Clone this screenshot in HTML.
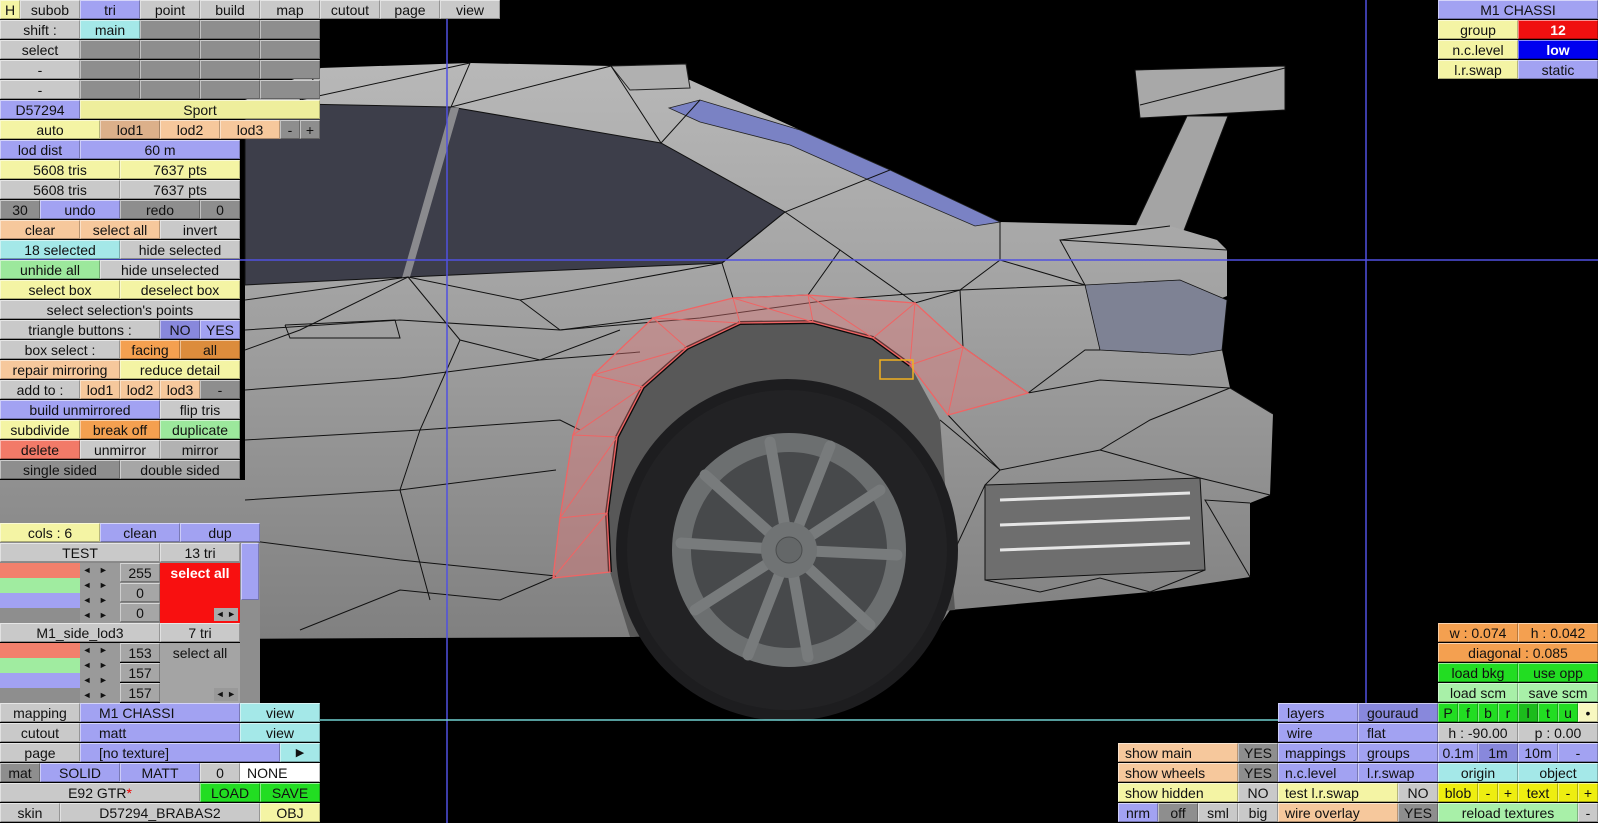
<!DOCTYPE html>
<html><head><meta charset="utf-8">
<style>
*{margin:0;padding:0;box-sizing:border-box}
body{width:1598px;height:823px;background:#000;position:relative;overflow:hidden;font-family:"Liberation Sans",sans-serif;font-size:14px;color:#111}
svg{position:absolute;left:0;top:0}
.b{position:absolute;height:19px;line-height:19px;text-align:center;white-space:nowrap;overflow:hidden;border-top:1px solid rgba(255,255,255,.55);border-left:1px solid rgba(255,255,255,.45);border-right:1px solid rgba(0,0,0,.25);border-bottom:1px solid rgba(0,0,0,.3)}
.g{background:#c9c9c9}.d{background:#8e8e8e}.u{background:#a2a2f2}.U{background:#8888dc}
.y{background:#f4f4a4}.p{background:#f6c89c}.P{background:#dcb08a}.c{background:#a4e8e8}
.o{background:#f4a050}.O{background:#dc8c3c}.n{background:#9ce89c}.r{background:#f27a68}
.G{background:#22dd22}.L{background:#a8f0a8}.Y{background:#eeee10}.w{background:#fff}
.m{background:#b2b2b2}.k{background:#a6a6a6}
.l{text-align:left;padding-left:18px}
</style></head><body>
<svg width="1598" height="823" viewBox="0 0 1598 823">
<defs>
<linearGradient id="bg" x1="0" y1="0" x2="0" y2="1">
<stop offset="0" stop-color="#b8b8b8"/><stop offset=".45" stop-color="#a0a0a0"/><stop offset="1" stop-color="#808080"/>
</linearGradient>
</defs>
<!-- spoiler -->
<polygon points="1187,116 1228,116 1183,233 1132,233" fill="#a4a4a4" stroke="#111" stroke-width="1"/>
<polygon points="1135,70 1285,66 1285,110 1140,118" fill="#a8a8a8" stroke="#111" stroke-width="1"/>
<line x1="1140" y1="105" x2="1285" y2="68" stroke="#111"/>
<!-- body -->
<polygon points="245,100 320,68 470,63 611,66 690,80 800,130 890,170 1000,222 1170,226 1217,240 1227,250 1227,296 1217,300 1222,350 1230,388 1273,414 1270,495 1250,503 1250,577 1150,592 950,610 940,625 630,637 0,640 0,480 245,480" fill="url(#bg)"/>
<polygon points="611,66 686,64 690,88 630,90" fill="#b0b0b0" stroke="#222" stroke-width="1"/>
<!-- window -->
<polygon points="245,103 451,107 661,143 785,212 722,263 408,277 245,285" fill="#3d3e4a" stroke="#111"/>
<polygon points="451,107 459,108 410,277 402,278" fill="#8a8a8e"/>
<!-- blue strip -->
<polygon points="669,108 700,100 800,130 890,170 1000,222 975,226 880,185 790,145 700,122" fill="#7a82c4" stroke="#222" stroke-width=".8"/>
<!-- tail light -->
<polygon points="1085,285 1180,280 1227,300 1222,350 1190,355 1100,350" fill="#7e8294" stroke="#111" stroke-width=".8"/>
<!-- vents -->
<polygon points="985,485 1200,478 1205,570 985,580" fill="#6e6e6e" stroke="#111"/>
<g stroke="#e6e6e6" stroke-width="3"><line x1="1000" y1="500" x2="1190" y2="493"/><line x1="1000" y1="525" x2="1190" y2="518"/><line x1="1000" y1="550" x2="1190" y2="543"/></g>
<!-- mesh lines -->
<g stroke="#111" stroke-width="1" fill="none">
<polyline points="245,300 408,277 520,300 722,263 785,212 890,170"/>
<polyline points="245,330 400,320 560,330 700,318 830,300 960,290 1085,285"/>
<polyline points="245,390 400,378 540,360 640,352"/>
<polyline points="245,440 420,430 560,420 580,430"/>
<polyline points="245,500 400,490 556,470"/>
<polyline points="245,540 400,560 556,576"/>
<polyline points="300,630 400,590 500,600 556,576"/>
<polyline points="408,277 460,340 540,360 620,330"/>
<polyline points="408,277 300,330 245,350"/>
<polyline points="460,340 420,430 400,490 430,600"/>
<polyline points="520,300 560,330 653,318"/>
<polyline points="722,263 733,298 808,295 840,250 785,212"/>
<polyline points="840,250 915,303 960,290 1000,260 1000,222"/>
<polyline points="960,290 963,347 1028,393 1085,350 1100,350"/>
<polyline points="1000,260 1085,285 1060,240 1170,226"/>
<polyline points="1060,240 1227,250"/>
<polyline points="1028,393 1100,380 1230,388 1273,414"/>
<polyline points="948,415 1000,470 985,485 950,560 950,610"/>
<polyline points="1000,470 1100,450 1150,420 1230,388"/>
<polyline points="1100,450 1200,478 1270,495"/>
<polyline points="1205,570 1150,592 1100,578 1040,592 985,580"/>
<polyline points="940,420 1000,470"/>
<polyline points="1250,503 1205,500 1250,577"/>
<polyline points="285,325 395,320 400,338 290,338 285,325"/>
<polyline points="320,68 300,100 470,63 451,107 611,66 661,143 700,100"/>
</g>
<!-- arch interior -->
<polygon points="610,572 607,513 617,437 643,387 687,348 740,323 813,322 873,338 910,365 940,420 955,610 630,637" fill="#585858"/>
<polyline points="610,572 607,513 617,437 643,387 687,348 740,323 813,322 873,338 910,365" fill="none" stroke="#0a0a0a" stroke-width="4"/>
<!-- red arch -->
<g stroke="#f06464" stroke-width="1.3" fill="rgba(232,120,120,0.4)">
<polygon points="553,578 560,518 573,435 593,375 653,318 733,298 808,295 915,303 963,347 1028,393 948,415 910,365 873,338 813,322 740,323 687,348 643,387 617,437 607,513 610,572"/>
</g>
<g stroke="#f06464" stroke-width="1" fill="none">
<polyline points="553,578 607,513 560,518 617,437 573,435 643,387 593,375 687,348 653,318 740,323 733,298 813,322 808,295 873,338 915,303 910,365 963,347 948,415"/>
</g>
<rect x="880" y="360" width="33" height="19" fill="none" stroke="#f0b020" stroke-width="1.5"/>
<!-- wheel -->
<circle cx="787" cy="550" r="171" fill="#1d1d1f"/>
<circle cx="787" cy="550" r="160" fill="#222224"/>
<circle cx="789" cy="550" r="117" fill="#6c6f70"/>
<circle cx="789" cy="550" r="98" fill="#47494b"/>
<g stroke="#787b7c" stroke-width="11" stroke-linecap="round">
<line x1="789" y1="550" x2="770" y2="442"/><line x1="789" y1="550" x2="830" y2="446"/>
<line x1="789" y1="550" x2="880" y2="490"/><line x1="789" y1="550" x2="897" y2="555"/>
<line x1="789" y1="550" x2="870" y2="625"/><line x1="789" y1="550" x2="808" y2="657"/>
<line x1="789" y1="550" x2="748" y2="655"/><line x1="789" y1="550" x2="695" y2="610"/>
<line x1="789" y1="550" x2="681" y2="543"/><line x1="789" y1="550" x2="705" y2="475"/>
</g>
<circle cx="789" cy="550" r="28" fill="#707374"/>
<circle cx="789" cy="550" r="13" fill="#646768" stroke="#4a4c4d"/>
<!-- guide lines -->
<line x1="447" y1="0" x2="447" y2="823" stroke="#5050e0" stroke-width="1.5"/>
<line x1="1366" y1="0" x2="1366" y2="703" stroke="#5050e0" stroke-width="1.5"/>
<line x1="0" y1="260" x2="1598" y2="260" stroke="#5050e0" stroke-width="1.5"/>
<line x1="0" y1="720" x2="1278" y2="720" stroke="#70d0d0" stroke-width="1.5"/>
</svg>

<!-- top row -->
<div class="b y" style="left:0;top:0;width:20px">H</div>
<div class="b g" style="left:20px;top:0;width:60px">subob</div>
<div class="b u" style="left:80px;top:0;width:60px">tri</div>
<div class="b g" style="left:140px;top:0;width:60px">point</div>
<div class="b g" style="left:200px;top:0;width:60px">build</div>
<div class="b g" style="left:260px;top:0;width:60px">map</div>
<div class="b g" style="left:320px;top:0;width:60px">cutout</div>
<div class="b g" style="left:380px;top:0;width:60px">page</div>
<div class="b g" style="left:440px;top:0;width:60px">view</div>
<div class="b g" style="left:0;top:20px;width:80px">shift :</div>
<div class="b c" style="left:80px;top:20px;width:60px">main</div>
<div class="b d" style="left:140px;top:20px;width:60px"></div><div class="b d" style="left:200px;top:20px;width:60px"></div><div class="b d" style="left:260px;top:20px;width:60px"></div>
<div class="b g" style="left:0;top:40px;width:80px">select</div>
<div class="b d" style="left:80px;top:40px;width:60px"></div><div class="b d" style="left:140px;top:40px;width:60px"></div><div class="b d" style="left:200px;top:40px;width:60px"></div><div class="b d" style="left:260px;top:40px;width:60px"></div>
<div class="b g" style="left:0;top:60px;width:80px">-</div>
<div class="b d" style="left:80px;top:60px;width:60px"></div><div class="b d" style="left:140px;top:60px;width:60px"></div><div class="b d" style="left:200px;top:60px;width:60px"></div><div class="b d" style="left:260px;top:60px;width:60px"></div>
<div class="b g" style="left:0;top:80px;width:80px">-</div>
<div class="b d" style="left:80px;top:80px;width:60px"></div><div class="b d" style="left:140px;top:80px;width:60px"></div><div class="b d" style="left:200px;top:80px;width:60px"></div><div class="b d" style="left:260px;top:80px;width:60px"></div>
<div class="b u" style="left:0;top:100px;width:80px">D57294</div>
<div class="b y" style="left:80px;top:100px;width:240px;background:#eeee9c">Sport</div>
<div class="b y" style="left:0;top:120px;width:100px">auto</div>
<div class="b P" style="left:100px;top:120px;width:60px">lod1</div>
<div class="b p" style="left:160px;top:120px;width:60px">lod2</div>
<div class="b p" style="left:220px;top:120px;width:60px">lod3</div>
<div class="b d" style="left:280px;top:120px;width:20px">-</div>
<div class="b d" style="left:300px;top:120px;width:20px">+</div>
<div class="b u" style="left:0;top:140px;width:80px">lod dist</div>
<div class="b u" style="left:80px;top:140px;width:160px">60 m</div>
<div class="b y" style="left:0;top:160px;width:120px">5608 tris</div>
<div class="b y" style="left:120px;top:160px;width:120px">7637 pts</div>
<div class="b g" style="left:0;top:180px;width:120px">5608 tris</div>
<div class="b g" style="left:120px;top:180px;width:120px">7637 pts</div>
<div class="b d" style="left:0;top:200px;width:40px">30</div>
<div class="b u" style="left:40px;top:200px;width:80px">undo</div>
<div class="b d" style="left:120px;top:200px;width:80px">redo</div>
<div class="b d" style="left:200px;top:200px;width:40px">0</div>
<div class="b p" style="left:0;top:220px;width:80px">clear</div>
<div class="b p" style="left:80px;top:220px;width:80px">select all</div>
<div class="b g" style="left:160px;top:220px;width:80px">invert</div>
<div class="b c" style="left:0;top:240px;width:120px">18 selected</div>
<div class="b g" style="left:120px;top:240px;width:120px">hide selected</div>
<div class="b n" style="left:0;top:260px;width:100px">unhide all</div>
<div class="b g" style="left:100px;top:260px;width:140px">hide unselected</div>
<div class="b y" style="left:0;top:280px;width:120px">select box</div>
<div class="b y" style="left:120px;top:280px;width:120px">deselect box</div>
<div class="b g" style="left:0;top:300px;width:240px">select selection's points</div>
<div class="b g" style="left:0;top:320px;width:160px">triangle buttons :</div>
<div class="b U" style="left:160px;top:320px;width:40px">NO</div>
<div class="b u" style="left:200px;top:320px;width:40px">YES</div>
<div class="b g" style="left:0;top:340px;width:120px">box select :</div>
<div class="b o" style="left:120px;top:340px;width:60px">facing</div>
<div class="b O" style="left:180px;top:340px;width:60px">all</div>
<div class="b p" style="left:0;top:360px;width:120px">repair mirroring</div>
<div class="b y" style="left:120px;top:360px;width:120px">reduce detail</div>
<div class="b g" style="left:0;top:380px;width:80px">add to :</div>
<div class="b p" style="left:80px;top:380px;width:40px">lod1</div>
<div class="b p" style="left:120px;top:380px;width:40px">lod2</div>
<div class="b p" style="left:160px;top:380px;width:40px">lod3</div>
<div class="b d" style="left:200px;top:380px;width:40px">-</div>
<div class="b u" style="left:0;top:400px;width:160px">build unmirrored</div>
<div class="b g" style="left:160px;top:400px;width:80px">flip tris</div>
<div class="b y" style="left:0;top:420px;width:80px">subdivide</div>
<div class="b o" style="left:80px;top:420px;width:80px">break off</div>
<div class="b n" style="left:160px;top:420px;width:80px">duplicate</div>
<div class="b r" style="left:0;top:440px;width:80px">delete</div>
<div class="b g" style="left:80px;top:440px;width:80px">unmirror</div>
<div class="b m" style="left:160px;top:440px;width:80px">mirror</div>
<div class="b d" style="left:0;top:460px;width:120px">single sided</div>
<div class="b k" style="left:120px;top:460px;width:120px">double sided</div>

<!-- bottom-left colours panel -->
<div class="b y" style="left:0;top:523px;width:100px">cols : 6</div>
<div class="b u" style="left:100px;top:523px;width:80px">clean</div>
<div class="b u" style="left:180px;top:523px;width:80px">dup</div>
<div class="b g" style="left:0;top:543px;width:160px">TEST</div>
<div class="b g" style="left:160px;top:543px;width:80px">13 tri</div>
<div style="position:absolute;left:240px;top:543px;width:20px;height:160px;background:#8e8e8e"></div>
<div class="b u" style="left:241px;top:543px;width:18px;height:57px"></div>
<div style="position:absolute;left:0;top:563px;width:80px;height:15px;background:#f2806c"></div>
<div style="position:absolute;left:0;top:578px;width:80px;height:15px;background:#a0eca0"></div>
<div style="position:absolute;left:0;top:593px;width:80px;height:15px;background:#a2a2f2"></div>
<div style="position:absolute;left:0;top:608px;width:80px;height:15px;background:#8e8e8e"></div>
<div style="position:absolute;left:80px;top:563px;width:40px;height:60px;background:#9a9a9a;font-size:9px;line-height:15px;color:#111">&nbsp;◄&nbsp;&nbsp;&nbsp;►<br>&nbsp;◄&nbsp;&nbsp;&nbsp;►<br>&nbsp;◄&nbsp;&nbsp;&nbsp;►<br>&nbsp;◄&nbsp;&nbsp;&nbsp;►</div>
<div class="b k" style="left:120px;top:563px;width:40px">255</div>
<div class="b k" style="left:120px;top:583px;width:40px">0</div>
<div class="b k" style="left:120px;top:603px;width:40px">0</div>
<div style="position:absolute;left:160px;top:563px;width:80px;height:60px;background:#f81010;color:#fff;font-weight:bold;text-align:center;line-height:20px">select all<div style="position:absolute;right:2px;bottom:2px;font-size:9px;color:#111;background:#aaa;line-height:13px;padding:0 2px">◄ ►</div></div>
<div class="b g" style="left:0;top:623px;width:160px">M1_side_lod3</div>
<div class="b g" style="left:160px;top:623px;width:80px">7 tri</div>
<div style="position:absolute;left:0;top:643px;width:80px;height:15px;background:#f2806c"></div>
<div style="position:absolute;left:0;top:658px;width:80px;height:15px;background:#a0eca0"></div>
<div style="position:absolute;left:0;top:673px;width:80px;height:15px;background:#a2a2f2"></div>
<div style="position:absolute;left:0;top:688px;width:80px;height:15px;background:#8e8e8e"></div>
<div style="position:absolute;left:80px;top:643px;width:40px;height:60px;background:#9a9a9a;font-size:9px;line-height:15px;color:#111">&nbsp;◄&nbsp;&nbsp;&nbsp;►<br>&nbsp;◄&nbsp;&nbsp;&nbsp;►<br>&nbsp;◄&nbsp;&nbsp;&nbsp;►<br>&nbsp;◄&nbsp;&nbsp;&nbsp;►</div>
<div class="b k" style="left:120px;top:643px;width:40px">153</div>
<div class="b k" style="left:120px;top:663px;width:40px">157</div>
<div class="b k" style="left:120px;top:683px;width:40px">157</div>
<div style="position:absolute;left:160px;top:643px;width:80px;height:60px;background:#a4a4a4;text-align:center;line-height:20px">select all<div style="position:absolute;right:2px;bottom:2px;font-size:9px;background:#999;line-height:13px;padding:0 2px">◄ ►</div></div>

<div class="b g" style="left:0;top:703px;width:80px">mapping</div>
<div class="b u l" style="left:80px;top:703px;width:160px">M1 CHASSI</div>
<div class="b c" style="left:240px;top:703px;width:80px">view</div>
<div class="b g" style="left:0;top:723px;width:80px">cutout</div>
<div class="b u l" style="left:80px;top:723px;width:160px">matt</div>
<div class="b c" style="left:240px;top:723px;width:80px">view</div>
<div class="b g" style="left:0;top:743px;width:80px">page</div>
<div class="b u l" style="left:80px;top:743px;width:200px">[no texture]</div>
<div class="b c" style="left:280px;top:743px;width:40px;font-size:11px">▶</div>
<div class="b d" style="left:0;top:763px;width:40px">mat</div>
<div class="b u" style="left:40px;top:763px;width:80px">SOLID</div>
<div class="b u" style="left:120px;top:763px;width:80px">MATT</div>
<div class="b g" style="left:200px;top:763px;width:40px">0</div>
<div class="b w l" style="left:240px;top:763px;width:80px;padding-left:6px">NONE</div>
<div class="b g" style="left:0;top:783px;width:200px">E92 GTR<span style="color:#e00">*</span></div>
<div class="b G" style="left:200px;top:783px;width:60px">LOAD</div>
<div class="b G" style="left:260px;top:783px;width:60px">SAVE</div>
<div class="b g" style="left:0;top:803px;width:60px">skin</div>
<div class="b g" style="left:60px;top:803px;width:200px">D57294_BRABAS2</div>
<div class="b y" style="left:260px;top:803px;width:60px">OBJ</div>

<!-- top right -->
<div class="b u" style="left:1438px;top:0;width:160px">M1 CHASSI</div>
<div class="b y" style="left:1438px;top:20px;width:80px">group</div>
<div class="b" style="left:1518px;top:20px;width:80px;background:#f01010;color:#fff;font-weight:bold">12</div>
<div class="b y" style="left:1438px;top:40px;width:80px">n.c.level</div>
<div class="b" style="left:1518px;top:40px;width:80px;background:#0000f0;color:#fff;font-weight:bold">low</div>
<div class="b y" style="left:1438px;top:60px;width:80px">l.r.swap</div>
<div class="b u" style="left:1518px;top:60px;width:80px">static</div>

<!-- bottom right -->
<div class="b o" style="left:1438px;top:623px;width:80px">w : 0.074</div>
<div class="b o" style="left:1518px;top:623px;width:80px">h : 0.042</div>
<div class="b o" style="left:1438px;top:643px;width:160px">diagonal : 0.085</div>
<div class="b G" style="left:1438px;top:663px;width:80px">load bkg</div>
<div class="b G" style="left:1518px;top:663px;width:80px">use opp</div>
<div class="b L" style="left:1438px;top:683px;width:80px">load scm</div>
<div class="b L" style="left:1518px;top:683px;width:80px">save scm</div>
<div class="b G" style="left:1438px;top:703px;width:20px">P</div>
<div class="b G" style="left:1458px;top:703px;width:20px">f</div>
<div class="b G" style="left:1478px;top:703px;width:20px">b</div>
<div class="b G" style="left:1498px;top:703px;width:20px">r</div>
<div class="b G" style="left:1518px;top:703px;width:20px;background:#1cbc1c">l</div>
<div class="b G" style="left:1538px;top:703px;width:20px">t</div>
<div class="b G" style="left:1558px;top:703px;width:20px">u</div>
<div class="b" style="left:1578px;top:703px;width:20px;background:#f8f8c0">•</div>
<div class="b u l" style="left:1278px;top:703px;width:80px;padding-left:8px">layers</div>
<div class="b U l" style="left:1358px;top:703px;width:80px;padding-left:8px">gouraud</div>
<div class="b u l" style="left:1278px;top:723px;width:80px;padding-left:8px">wire</div>
<div class="b u l" style="left:1358px;top:723px;width:80px;padding-left:8px">flat</div>
<div class="b g" style="left:1438px;top:723px;width:80px">h : -90.00</div>
<div class="b g" style="left:1518px;top:723px;width:80px">p : 0.00</div>
<div class="b p l" style="left:1118px;top:743px;width:120px;padding-left:6px">show main</div>
<div class="b d" style="left:1238px;top:743px;width:40px">YES</div>
<div class="b u l" style="left:1278px;top:743px;width:80px;padding-left:6px">mappings</div>
<div class="b u l" style="left:1358px;top:743px;width:80px;padding-left:8px">groups</div>
<div class="b u" style="left:1438px;top:743px;width:40px">0.1m</div>
<div class="b U" style="left:1478px;top:743px;width:40px">1m</div>
<div class="b u" style="left:1518px;top:743px;width:40px">10m</div>
<div class="b u" style="left:1558px;top:743px;width:40px">-</div>
<div class="b p l" style="left:1118px;top:763px;width:120px;padding-left:6px">show wheels</div>
<div class="b d" style="left:1238px;top:763px;width:40px">YES</div>
<div class="b u l" style="left:1278px;top:763px;width:80px;padding-left:6px">n.c.level</div>
<div class="b u l" style="left:1358px;top:763px;width:80px;padding-left:8px">l.r.swap</div>
<div class="b c" style="left:1438px;top:763px;width:80px">origin</div>
<div class="b c" style="left:1518px;top:763px;width:80px">object</div>
<div class="b y l" style="left:1118px;top:783px;width:120px;padding-left:6px">show hidden</div>
<div class="b g" style="left:1238px;top:783px;width:40px">NO</div>
<div class="b y l" style="left:1278px;top:783px;width:120px;padding-left:6px">test l.r.swap</div>
<div class="b g" style="left:1398px;top:783px;width:40px">NO</div>
<div class="b Y" style="left:1438px;top:783px;width:40px">blob</div>
<div class="b Y" style="left:1478px;top:783px;width:20px">-</div>
<div class="b Y" style="left:1498px;top:783px;width:20px">+</div>
<div class="b Y" style="left:1518px;top:783px;width:40px">text</div>
<div class="b Y" style="left:1558px;top:783px;width:20px">-</div>
<div class="b Y" style="left:1578px;top:783px;width:20px">+</div>
<div class="b u" style="left:1118px;top:803px;width:40px">nrm</div>
<div class="b d" style="left:1158px;top:803px;width:40px">off</div>
<div class="b g" style="left:1198px;top:803px;width:40px">sml</div>
<div class="b g" style="left:1238px;top:803px;width:40px">big</div>
<div class="b p l" style="left:1278px;top:803px;width:120px;padding-left:6px">wire overlay</div>
<div class="b d" style="left:1398px;top:803px;width:40px">YES</div>
<div class="b L" style="left:1438px;top:803px;width:140px">reload textures</div>
<div class="b g" style="left:1578px;top:803px;width:20px">-</div>
</body></html>
